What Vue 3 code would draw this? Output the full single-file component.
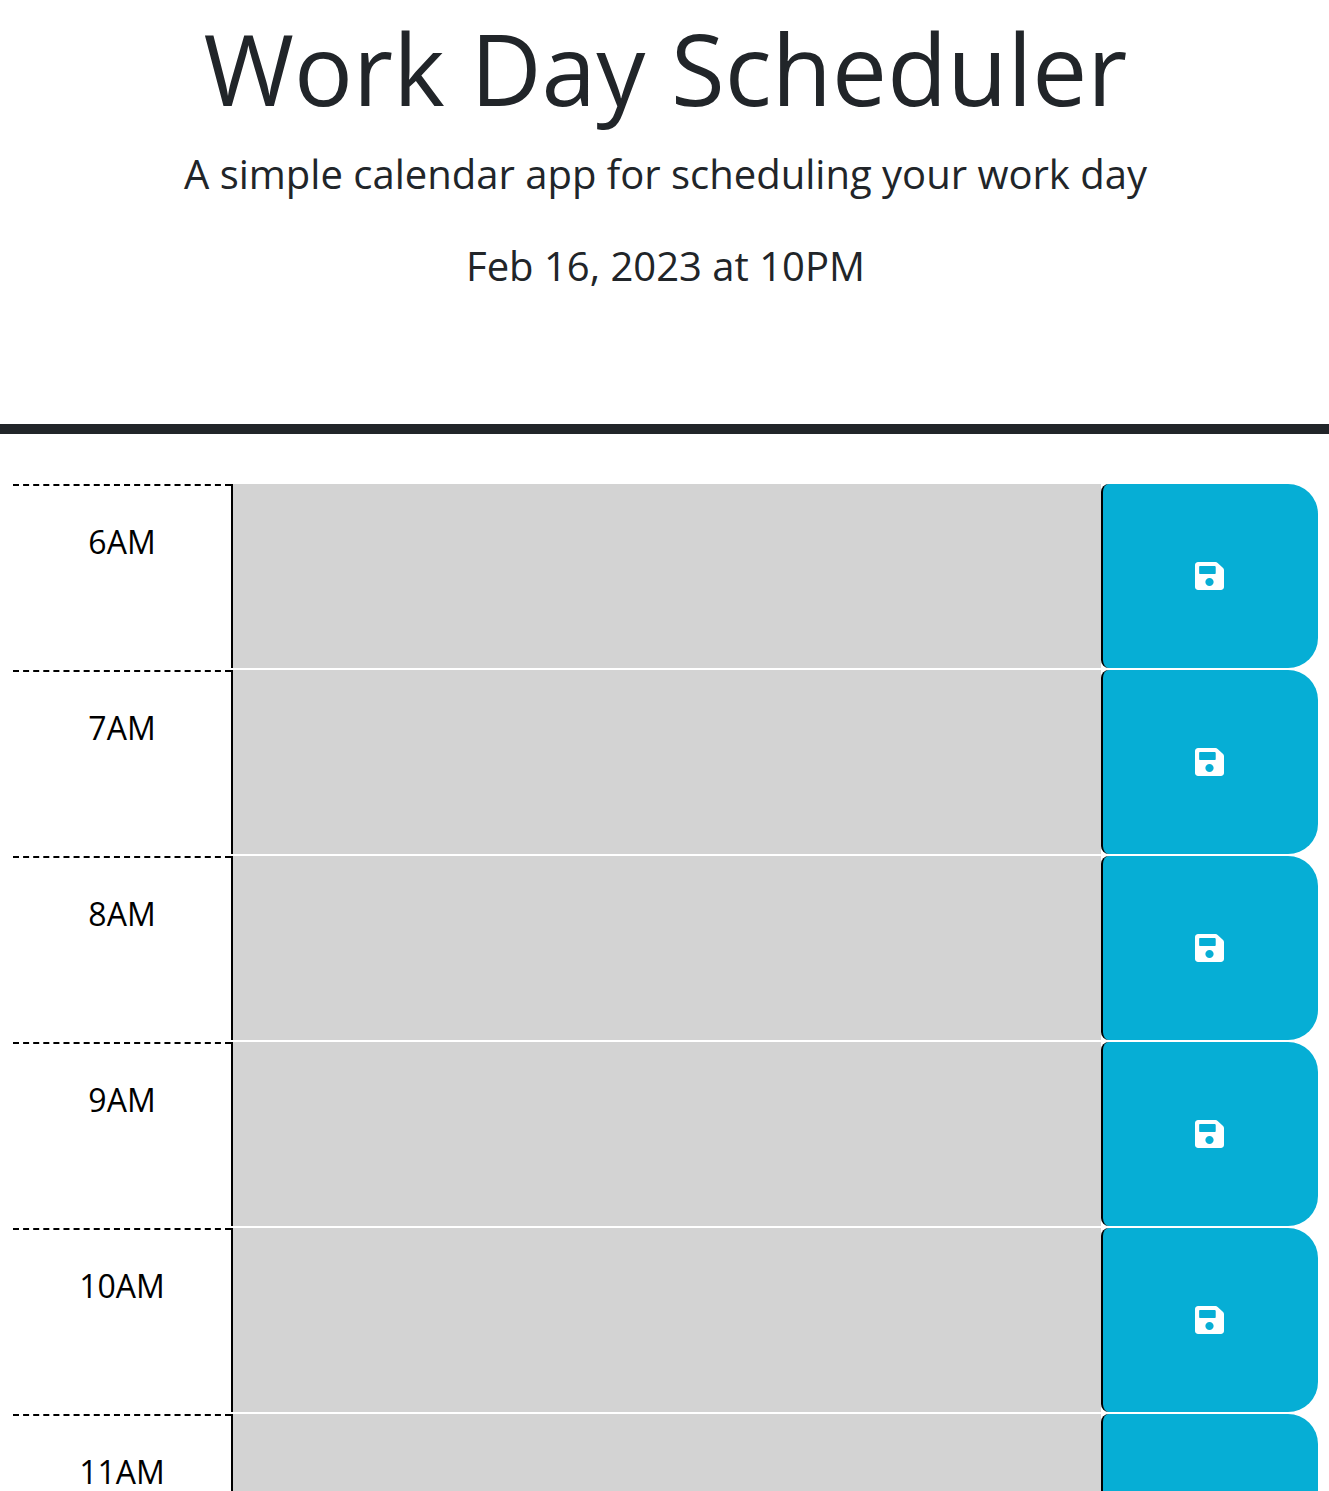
<script setup>
const hours = ['6AM', '7AM', '8AM', '9AM', '10AM', '11AM']
</script>

<template>
  <div class="page">
    <header class="jumbotron">
      <h1>Work Day Scheduler</h1>
      <p class="lead">A simple calendar app for scheduling your work day</p>
      <p class="date">Feb 16, 2023 at 10PM</p>
    </header>
    <main class="container">
      <div v-for="hour in hours" :key="hour" class="row">
        <div class="hour">{{ hour }}</div>
        <div class="past" contenteditable="true" role="textbox"></div>
        <button class="save" aria-label="Save">
          <svg viewBox="0 0 448 512" width="29" height="32" preserveAspectRatio="none" fill="currentColor">
            <path d="M433.941 129.941l-83.882-83.882A48 48 0 0 0 316.118 32H48C21.49 32 0 53.49 0 80v352c0 26.51 21.49 48 48 48h352c26.51 0 48-21.49 48-48V163.882a48 48 0 0 0-14.059-33.941zM224 416c-35.346 0-64-28.654-64-64 0-35.346 28.654-64 64-64s64 28.654 64 64c0 35.346-28.654 64-64 64zm96-304.52V212c0 6.627-5.373 12-12 12H76c-6.627 0-12-5.373-12-12V108c0-6.627 5.373-12 12-12h228.52c3.183 0 6.235 1.264 8.485 3.515l3.48 3.48A11.996 11.996 0 0 1 320 111.48z" />
          </svg>
        </button>
      </div>
    </main>
  </div>
</template>

<style>
body {
  margin: 0;
  background: #fff;
}
</style>

<style scoped>
.page {
  height: 1491px;
  overflow: hidden;
  font-family: "Open Sans", sans-serif;
  font-size: 32px;
  line-height: 48px;
  color: #212529;
}

.jumbotron {
  box-sizing: border-box;
  height: 434px;
  padding: 9px 0 0 2px;
  border-bottom: 10px solid #212529;
  text-align: center;
}

h1 {
  margin: 0 0 17px;
  font-size: 98px;
  font-weight: 400;
  line-height: 118px;
  letter-spacing: 0.1px;
}

.lead,
.date {
  margin: 0 0 32px;
  font-size: 40px;
  line-height: 60px;
}

.container {
  margin: 50px 11px 0 13px;
}

.row {
  display: grid;
  grid-template-columns: 218px 870px 217px;
  height: 184px;
  margin-bottom: 2px;
}

.hour {
  padding-top: 32px;
  border-top: 2px dashed #000;
  color: #000;
  text-align: center;
}

.past {
  border-left: 2px solid #000;
  background: #d3d3d3;
}

.save {
  display: flex;
  align-items: center;
  justify-content: center;
  padding: 0 2px 0 0;
  border: 0;
  border-left: 2px solid #000;
  border-radius: 8px 30px 30px 8px;
  background: #06aed5;
  color: #fff;
}

.save svg {
  display: block;
}
</style>
